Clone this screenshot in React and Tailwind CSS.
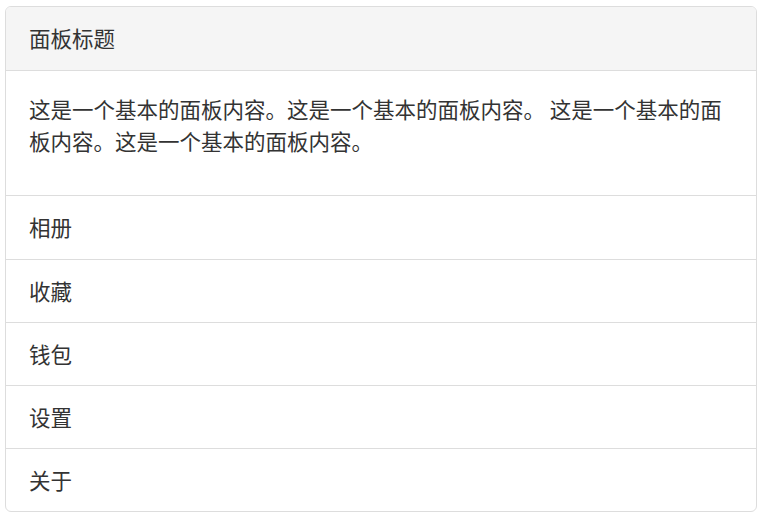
const items = ['相册', '收藏', '钱包', '设置', '关于'];

function App() {
  return (
    <div
      className="min-h-screen bg-white px-[5px] pt-[6px] text-[#333] text-[21.5px]"
      style={{ fontFamily: '"Noto Sans CJK SC", "Noto Sans", sans-serif' }}
    >
      <div className="rounded-[6px] border border-[#ddd] bg-white">
        <div className="flex h-[64px] items-center rounded-t-[5px] border-b border-[#ddd] bg-[#f5f5f5] px-[23px]">
          面板标题
        </div>
        <div className="px-[23px] pb-[23px] pt-[22px]">
          <p className="mb-[15px] leading-[32px]">
            这是一个基本的面板内容。这是一个基本的面板内容。 这是一个基本的面板内容。这是一个基本的面板内容。
          </p>
        </div>
        <ul>
          {items.map((item, i) => (
            <li
              key={item}
              className={
                i === 0
                  ? 'flex h-[64px] items-center border-t border-[#ddd] px-[23px]'
                  : 'flex h-[63px] items-center border-t border-[#ddd] px-[23px]'
              }
            >
              {item}
            </li>
          ))}
        </ul>
      </div>
    </div>
  );
}

export default App;
